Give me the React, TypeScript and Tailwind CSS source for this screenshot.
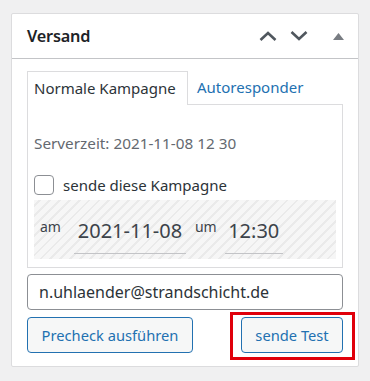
import React from "react";

export default function App() {
  return (
    <div
      className="w-[370px] h-[381px] bg-[#f0f0f1] pt-[13px] pl-[11px]"
      style={{ fontFamily: '"Noto Sans", "Open Sans", sans-serif' }}
    >
      <div className="w-[348px] h-[354px] bg-white border border-[#dcdcde] rounded-[2px] flex flex-col">
        {/* header */}
        <div className="h-[45px] shrink-0 border-b border-[#c3c4c7] flex items-center pl-[15px] pr-[14px]">
          <h2 className="text-[16.3px] font-semibold text-[#1d2327] tracking-[-0.2px]">Versand</h2>
          <div className="ml-auto flex items-center">
            <svg width="18" height="10" viewBox="0 0 18 10" className="mr-[13px] -ml-[2px]">
              <path d="M1.5 9 L9 2 L16.5 9" fill="none" stroke="#50575e" strokeWidth="2.6" />
            </svg>
            <svg width="18" height="10" viewBox="0 0 18 10" className="mr-[25px]">
              <path d="M1.5 1 L9 8 L16.5 1" fill="none" stroke="#50575e" strokeWidth="2.6" />
            </svg>
            <svg width="11" height="7" viewBox="0 0 11 7">
              <path d="M0 7 L5.5 0 L11 7 Z" fill="#787c82" />
            </svg>
          </div>
        </div>

        {/* body */}
        <div className="pt-[12px] px-[15px] flex flex-col">
          {/* tabs */}
          <div className="flex items-end h-[33px]">
            <div className="h-[34px] w-[161px] border border-b-0 border-[#dcdcde] bg-white flex items-center pl-[6px] text-[15px] text-[#2c3338] relative z-10 -mb-px">
              Normale Kampagne
            </div>
            <div className="h-[33px] flex items-center pl-[9px] text-[15px] text-[#2271b1]">
              Autoresponder
            </div>
          </div>
          <div className="h-[164px] border border-[#dcdcde] px-[6px] flex flex-col">
            <div className="pt-[27px] text-[15.3px] text-[#646970] leading-[22px]">
              Serverzeit: 2021-11-08 12 30
            </div>
            <div className="mt-[21px] flex items-center h-[20px]">
              <div className="w-[20px] h-[20px] border border-[#8c8f94] rounded-[4px] bg-white" />
              <span className="ml-[9px] text-[15px] text-[#2c3338]">sende diese Kampagne</span>
            </div>
            <div className="mt-[5px] h-[59px] flex items-center pl-[6px] bg-[repeating-linear-gradient(-45deg,#f6f6f6_0px,#f6f6f6_5px,#eaeaea_5px,#eaeaea_7px)]">
              <span className="text-[14px] text-[#3c434a] -mt-[6px]">am</span>
              <div className="ml-[13px] w-[112px] h-[46px] mt-[3px] border-b border-[#c3c4c7] flex items-center justify-center text-[20px] text-[#3c434a]">
                2021-11-08
              </div>
              <span className="ml-[9px] text-[14px] text-[#3c434a] -mt-[6px]">um</span>
              <div className="ml-[8px] w-[58px] h-[46px] mt-[3px] border-b border-[#c3c4c7] flex items-center justify-center text-[20px] text-[#3c434a]">
                12:30
              </div>
            </div>
          </div>

          {/* email */}
          <div className="mt-[6px] h-[36px] border border-[#8c8f94] rounded-[4px] flex items-center pl-[11px] text-[16px] text-[#2c3338]">
            n.uhlaender@strandschicht.de
          </div>

          {/* buttons */}
          <div className="mt-[7px] flex items-center relative">
            <div className="w-[166px] h-[36px] border border-[#2271b1] rounded-[4px] bg-[#f6f7f7] flex items-center justify-center text-[14.7px] text-[#2271b1]">
              Precheck ausführen
            </div>
            <div className="ml-auto w-[102px] h-[36px] border border-[#2271b1] rounded-[4px] bg-[#f6f7f7] flex items-center justify-center text-[14.7px] text-[#2271b1]">
              sende Test
            </div>
            <div className="absolute left-[203px] top-[-5px] w-[125px] h-[48px] border-[3px] border-[#e0000b]" />
          </div>
        </div>
      </div>
    </div>
  );
}
